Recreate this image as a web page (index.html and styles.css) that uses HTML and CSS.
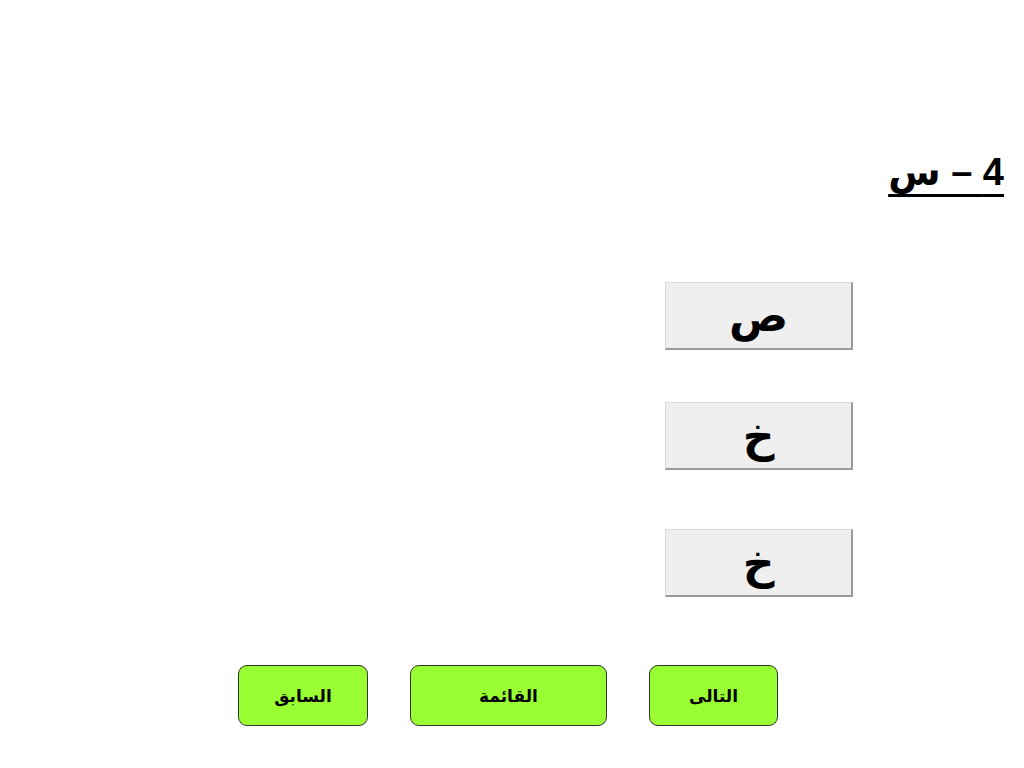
FILE: index.html
```html
<!DOCTYPE html>
<html lang="ar">
<head>
  <meta charset="UTF-8">
  <meta name="viewport" content="width=device-width, initial-scale=1.0">
  <title>4 – س</title>
  <link rel="stylesheet" href="styles.css">
</head>
<body>
  <div class="page">
    <h1 class="title" dir="rtl">4 – س</h1>

    <div class="choices">
      <div class="choice">ص</div>
      <div class="choice">خ</div>
      <div class="choice choice-last">خ</div>
    </div>

    <div class="nav">
      <button class="nav-btn btn-prev">السابق</button>
      <button class="nav-btn btn-menu">القائمة</button>
      <button class="nav-btn btn-next">التالى</button>
    </div>
  </div>
</body>
</html>
```

FILE: styles.css
```css
body {
  margin: 0;
  padding: 0;
  background-color: #ffffff;
  font-family: 'Liberation Sans', 'DejaVu Sans', sans-serif;
}
.page {
  width: 1024px;
  height: 768px;
  display: flex;
  flex-direction: column;
}
.title {
  margin: 148px 20px 0 0;
  align-self: flex-end;
  font-size: 38px;
  font-weight: bold;
  color: #000000;
  text-decoration: underline;
  text-decoration-thickness: 3px;
  text-underline-offset: 9px;
  line-height: 48px;
}
.choices {
  display: flex;
  flex-direction: column;
  align-items: flex-end;
  gap: 52px;
  padding-right: 171px;
  margin-top: 86px;
}
.choice {
  width: 185px;
  height: 65px;
  background-color: #efefef;
  border-top: 1px solid #d8d8d8;
  border-left: 1px solid #d8d8d8;
  border-right: 2px solid #9a9a9a;
  border-bottom: 2px solid #9a9a9a;
  display: flex;
  align-items: center;
  justify-content: center;
  font-family: 'DejaVu Sans', sans-serif;
  font-size: 44px;
  font-weight: bold;
  color: #000000;
}
.choice-last {
  margin-top: 7px;
}
.nav {
  display: flex;
  gap: 42px;
  margin-top: 68px;
  padding-left: 238px;
}
.nav-btn {
  height: 61px;
  background-color: #99ff33;
  border: 1px solid #333333;
  border-radius: 9px;
  font-family: 'DejaVu Sans', sans-serif;
  font-size: 17px;
  font-weight: bold;
  color: #000000;
  padding: 0;
}
.btn-prev {
  width: 130px;
}
.btn-menu {
  width: 197px;
}
.btn-next {
  width: 129px;
}
```
